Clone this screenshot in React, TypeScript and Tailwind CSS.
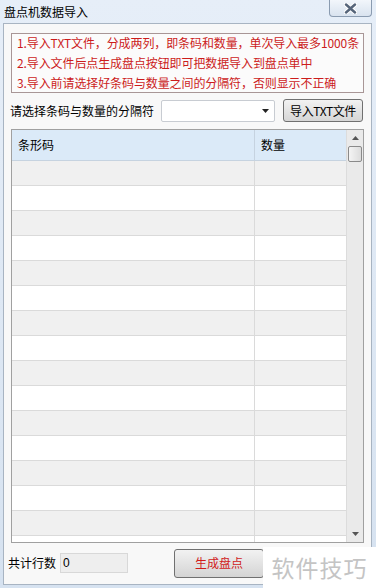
import React from 'react';

const font = { fontFamily: '"Microsoft YaHei", "Noto Sans CJK SC", "Liberation Sans", sans-serif' };

const rows = Array.from({ length: 16 });

export default function App() {
    return (
        <div className="w-[376px] h-[588px] overflow-hidden bg-gradient-to-b from-[#e6eef8] to-[#d6e2f0] relative" style={font}>
            {/* title bar */}
            <div className="h-[23px] flex items-center justify-between pl-[4px] pr-[4px]">
                <span className="text-[12px] text-black leading-none whitespace-nowrap">盘点机数据导入</span>
                <div className="self-start w-[43px] h-[17px] rounded-b-[4px] border border-t-0 border-[#8a9bb0] bg-gradient-to-b from-[#f2f6fb] to-[#d9e3ef] flex items-center justify-center">
                    <svg width="13" height="11" viewBox="0 0 13 11">
                        <path d="M2 1.5L11 9.5M11 1.5L2 9.5" stroke="#ffffff" strokeWidth="4.5" strokeLinecap="round" />
                        <path d="M2 1.5L11 9.5M11 1.5L2 9.5" stroke="#56657a" strokeWidth="2.4" strokeLinecap="round" />
                    </svg>
                </div>
            </div>

            {/* client area */}
            <div className="ml-[3px] mr-[4px] h-[562px] bg-[#f8f8f8] border border-[#a8b4c2] flex flex-col px-[7px]">
                <div className="mt-[9px] h-[60px] border border-[#a89696] bg-[#fbfbfb] pl-[5px] text-[12px] leading-[20px] text-[#cc1c1c] whitespace-nowrap tracking-[-0.1px]">
                    <div className="-mt-[1px]">1.导入TXT文件，分成两列，即条码和数量，单次导入最多1000条</div>
                    <div>2.导入文件后点生成盘点按钮即可把数据导入到盘点单中</div>
                    <div>3.导入前请选择好条码与数量之间的分隔符，否则显示不正确</div>
                </div>

                <div className="mt-[6px] h-[23px] flex items-center">
                    <span className="text-[12px] text-black w-[151px] shrink-0 -ml-[1px] whitespace-nowrap">请选择条码与数量的分隔符</span>
                    <div className="w-[114px] h-[22px] bg-white border border-[#c8ccd2] rounded-[2px] flex items-center justify-end pr-[5px]">
                        <svg width="7" height="4" viewBox="0 0 7 4"><path d="M0 0h7L3.5 4z" fill="#222" /></svg>
                    </div>
                    <div className="ml-[8px] w-[80px] h-[23px] rounded-[3px] border border-[#707070] bg-gradient-to-b from-[#f2f2f2] to-[#d6d6d6] flex items-center justify-center text-[12px] text-black whitespace-nowrap tracking-[-0.4px]">
                        导入TXT文件
                    </div>
                </div>

                {/* grid */}
                <div className="mt-[7px] h-[414px] border border-[#a0a0a0] bg-white flex overflow-hidden">
                    <div className="flex-1 flex flex-col overflow-hidden">
                        <div className="h-[31px] shrink-0 flex bg-[#dbeaf8] border-b border-[#c6d3e0] text-[12px] text-black">
                            <div className="w-[243px] pl-[6px] flex items-center border-r border-[#c6d3e0]">条形码</div>
                            <div className="flex-1 pl-[6px] flex items-center">数量</div>
                        </div>
                        {rows.map((_, i) => (
                            <div key={i} className={`h-[25px] shrink-0 flex border-b border-[#dadada] ${i % 2 === 0 ? 'bg-[#f0f0f0]' : 'bg-white'}`}>
                                <div className="w-[243px] border-r border-[#dadada]" />
                                <div className="flex-1" />
                            </div>
                        ))}
                    </div>
                    <div className="w-[17px] shrink-0 bg-[#eaeaea] border-l border-[#dcdcdc] flex flex-col items-center">
                        <div className="h-[16px] flex items-center justify-center">
                            <svg width="7" height="4" viewBox="0 0 7 4"><path d="M3.5 0L7 4H0z" fill="#555" /></svg>
                        </div>
                        <div className="w-[14px] h-[16px] rounded-[2px] border border-[#8a8a8a] bg-gradient-to-r from-[#f4f4f4] to-[#dcdcdc]" />
                        <div className="flex-1" />
                        <div className="h-[16px] flex items-center justify-center">
                            <svg width="7" height="4" viewBox="0 0 7 4"><path d="M0 0h7L3.5 4z" fill="#555" /></svg>
                        </div>
                    </div>
                </div>

                {/* bottom */}
                <div className="mt-[2px] flex items-center h-[36px]">
                    <span className="text-[12px] text-black -ml-[3px] whitespace-nowrap">共计行数</span>
                    <div className="ml-[4px] w-[68px] h-[20px] bg-[#eeeeee] border border-[#d8d8d8] text-[12px] leading-[18px] pl-[2px] text-black" style={{ fontFamily: '"Liberation Sans", sans-serif' }}>0</div>
                    <div className="ml-[46px] w-[90px] h-[29px] rounded-[3px] border border-[#707070] bg-gradient-to-b from-[#f2f2f2] to-[#d4d4d4] flex items-center justify-center text-[12px] text-[#d11b1b] whitespace-nowrap">
                        生成盘点
                    </div>
                </div>
            </div>

            {/* watermark */}
            <div className="absolute left-[263px] top-[547px] w-[113px] h-[41px] bg-white flex items-center justify-center text-[23px] text-[#c4c4c4] tracking-[1px] whitespace-nowrap">
                软件技巧
            </div>
        </div>
    );
}
